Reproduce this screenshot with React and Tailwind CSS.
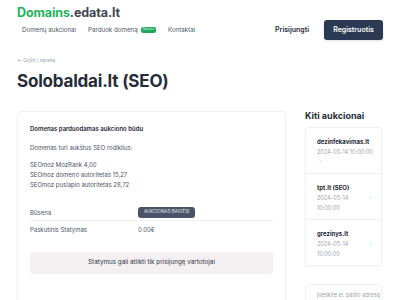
import React from 'react';
import { ChevronRight } from 'lucide-react';

const otherAuctions = [
  { name: 'dezinfekavimas.lt', date: '2024-05-14 10:00:00', wide: true },
  { name: 'tpt.lt (SEO)', date: '2024-05-14 10:00:00' },
  { name: 'grezinys.lt', date: '2024-05-14 10:00:00' },
];

const App = () => {
  return (
    <div className="w-[400px] h-[300px] overflow-hidden bg-white text-[#374151] font-['Inter',sans-serif]">
      {/* Header */}
      <div className="px-[17px] pt-[5px]">
        <div className="text-[12.5px] font-bold leading-[16px] tracking-[-0.1px]">
          <span className="text-[#22b35e]">Domains</span>
          <span className="text-[#3f4654]">.edata.lt</span>
        </div>
        <div className="flex items-center justify-between mt-[-1px]">
          <nav className="flex items-center gap-[12px] pl-[5px] text-[6.2px] text-[#4b5563]">
            <span>Domenų aukcionai</span>
            <span className="flex items-center gap-[3px]">
              Parduok domeną
              <span className="bg-[#22a45a] text-[#d1fae5] text-[3.5px] rounded-[2px] px-[2px] py-[1px] leading-none">
                Naujas
              </span>
            </span>
            <span>Kontaktai</span>
          </nav>
          <div className="flex items-center gap-[15px]">
            <span className="text-[7px] font-semibold text-[#1f2937]">Prisijungti</span>
            <button className="w-[59px] h-[20px] rounded-[3px] bg-[#2b3a52] text-white text-[7px] font-semibold shadow">
              Registruotis
            </button>
          </div>
        </div>
      </div>

      {/* Back link + title */}
      <div className="px-[17px] mt-[17px]">
        <div className="text-[5px] text-[#9ca3af]">← Grįžti į sąrašą</div>
        <h1 className="mt-[5px] text-[17px] font-bold text-[#262c38] leading-[22px] tracking-[-0.2px]">
          Solobaldai.lt (SEO)
        </h1>
      </div>

      <div className="flex gap-[19px] px-[17px] mt-[19px]">
        {/* Main card */}
        <div className="w-[269px] shrink-0 border border-[#f0f1f3] rounded-[5px] shadow-[0_1px_3px_rgba(0,0,0,0.04)] px-[12px] pt-[12px] pb-[17px]">
          <div className="text-[6px] font-semibold text-[#1f2937]">Domenas parduodamas aukciono būdu</div>
          <div className="mt-[10px] text-[6px] leading-[10px] text-[#4b5563]">
            <p>Domenas turi aukštus SEO rodiklius:</p>
            <p className="mt-[7px]">SEOmoz MozRank 4,00</p>
            <p>SEOmoz domeno autoritetas 15,27</p>
            <p>SEOmoz puslapio autoritetas 28,72</p>
          </div>
          <div className="mt-[15px] text-[6px] text-[#4b5563]">
            <div className="flex items-center h-[16px] border-b border-[#f1f2f4]">
              <span className="w-[108px]">Būsena</span>
              <span className="bg-[#4a5468] text-[#e5e7eb] text-[4.5px] uppercase rounded-[3px] px-[6px] h-[11px] flex items-center">
                Aukcionas baigėsi
              </span>
            </div>
            <div className="flex items-center h-[17px]">
              <span className="w-[108px]">Paskutinis Statymas</span>
              <span>0.00€</span>
            </div>
          </div>
          <div className="mt-[14px] h-[22px] rounded-[3px] bg-[#f4f0f1] flex items-center justify-center text-[6.3px] text-[#2f3542]">
            Statymus gali atlikti tik prisijungę vartotojai
          </div>
        </div>

        {/* Sidebar */}
        <div className="w-[77px] shrink-0">
          <h2 className="text-[9px] font-bold text-[#262c38] leading-[12px] mt-[-1px]">Kiti aukcionai</h2>
          <div className="mt-[5px] border border-[#f0f1f3] rounded-[4px] shadow-[0_1px_3px_rgba(0,0,0,0.04)]">
            {otherAuctions.map((a, i) => (
              <div key={i} className={`pl-[11px] pr-[7px] pt-[9px] pb-[6px] ${i > 0 ? 'border-t border-[#f1f2f4]' : ''}`}>
                <div className="text-[6px] font-bold text-[#1f2937] leading-[10px]">{a.name}</div>
                {a.wide ? (
                  <div>
                    <div className="text-[5.5px] text-[#9ca3af] leading-[10px] whitespace-nowrap">{a.date}</div>
                    <div className="h-[10px] flex items-center">
                      <ChevronRight size={7} className="text-[#86efac]" strokeWidth={1.5} />
                    </div>
                  </div>
                ) : (
                  <div className="flex items-start justify-between">
                    <div className="text-[5.5px] text-[#9ca3af] leading-[10px] w-[36px]">{a.date}</div>
                    <div className="h-[10px] flex items-center">
                      <ChevronRight size={7} className="text-[#86efac]" strokeWidth={1.5} />
                    </div>
                  </div>
                )}
              </div>
            ))}
          </div>
          <div className="mt-[18px] border border-[#f0f1f3] rounded-[4px] px-[11px] pt-[6px] pb-[6px] text-[5.5px] text-[#9ca3af] whitespace-nowrap overflow-hidden">
            Įveskite el. pašto adresą
          </div>
        </div>
      </div>
    </div>
  );
};

export default App;
